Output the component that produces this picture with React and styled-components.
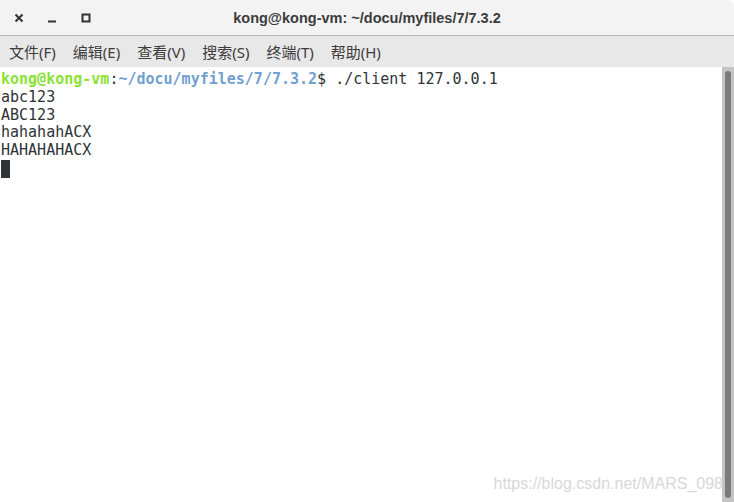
import React from 'react';
import styled, { createGlobalStyle } from 'styled-components';

const GlobalStyle = createGlobalStyle`
html, body {
  margin: 0;
  padding: 0;
  background: #ffffff;
}
`

const Window = styled.div`
width: 734px;
height: 502px;
display: flex;
flex-direction: column;
overflow: hidden;
background: #ffffff;
`

const TitleBar = styled.div`
height: 35px;
flex: none;
display: flex;
align-items: center;
position: relative;
background: #f3f3f3;
border-bottom: 1px solid #b6b6b6;
border-top-right-radius: 7px;
`

const Controls = styled.div`
display: flex;
align-items: center;
padding-left: 10px;
`

const Ctrl = styled.div`
width: ${p => p.w}px;
height: 20px;
display: flex;
align-items: center;
justify-content: center;
`

const Title = styled.div`
position: absolute;
left: 0;
right: 0;
top: 0;
bottom: 0;
display: flex;
align-items: center;
justify-content: center;
font-family: "Liberation Sans", Arial, sans-serif;
font-size: 14.5px;
font-weight: bold;
color: #3c3c3c;
pointer-events: none;
`

const MenuBar = styled.div`
height: 31px;
flex: none;
display: flex;
align-items: center;
padding-left: 9px;
gap: 17px;
background: #e8e8e8;
font-family: "Noto Sans", "Noto Sans CJK SC", sans-serif;
font-size: 15px;
color: #3c3c3c;
`

const MenuItem = styled.span`
display: inline-block;
`

const Body = styled.div`
flex: 1;
display: flex;
position: relative;
`

const Term = styled.div`
flex: 1;
padding: 4px 0 0 1px;
font-family: "DejaVu Sans Mono", monospace;
font-size: 15px;
line-height: 17.75px;
color: #2e3436;
white-space: pre;
`

const Line = styled.div`
height: 17.75px;
`

const User = styled.span`
color: #8ae234;
font-weight: bold;
`

const Path = styled.span`
color: #729fcf;
font-weight: bold;
`

const Cursor = styled.span`
display: inline-block;
width: 9px;
height: 18px;
background: #2e3436;
vertical-align: top;
`

const Trough = styled.div`
width: 12px;
flex: none;
background: #c4c4c4;
display: flex;
justify-content: center;
padding: 4px 0 4px;
box-sizing: border-box;
`

const Thumb = styled.div`
width: 6px;
height: 100%;
border-radius: 3px;
background: #7b7b7b;
`

const Watermark = styled.div`
position: absolute;
right: 11px;
bottom: 9px;
font-family: "Liberation Sans", Arial, sans-serif;
font-size: 16px;
color: #d8d8d8;
`

export default function App() {
    const menus = ['文件(F)', '编辑(E)', '查看(V)', '搜索(S)', '终端(T)', '帮助(H)'];
    return (
        <Window>
            <GlobalStyle />
            <TitleBar>
                <Controls>
                    <Ctrl w={17}>
                        <svg width="10" height="10" viewBox="0 0 10 10">
                            <path d="M1.5 1.5 L8.5 8.5 M8.5 1.5 L1.5 8.5" stroke="#333" strokeWidth="2" />
                        </svg>
                    </Ctrl>
                    <Ctrl w={50}>
                        <svg width="10" height="10" viewBox="0 0 10 10">
                            <rect x="1" y="7.5" width="8" height="2" fill="#333" />
                        </svg>
                    </Ctrl>
                    <Ctrl w={18}>
                        <svg width="10" height="10" viewBox="0 0 10 10">
                            <rect x="1.5" y="1.5" width="7" height="7" fill="none" stroke="#333" strokeWidth="2" />
                        </svg>
                    </Ctrl>
                </Controls>
                <Title>kong@kong-vm: ~/docu/myfiles/7/7.3.2</Title>
            </TitleBar>
            <MenuBar>
                {menus.map(m => <MenuItem key={m}>{m}</MenuItem>)}
            </MenuBar>
            <Body>
                <Term>
                    <Line><User>kong@kong-vm</User>:<Path>~/docu/myfiles/7/7.3.2</Path>$ ./client 127.0.0.1</Line>
                    <Line>abc123</Line>
                    <Line>ABC123</Line>
                    <Line>hahahahACX</Line>
                    <Line>HAHAHAHACX</Line>
                    <Line><Cursor /></Line>
                </Term>
                <Trough>
                    <Thumb />
                </Trough>
                <Watermark>https://blog.csdn.net/MARS_098</Watermark>
            </Body>
        </Window>
    )
}
